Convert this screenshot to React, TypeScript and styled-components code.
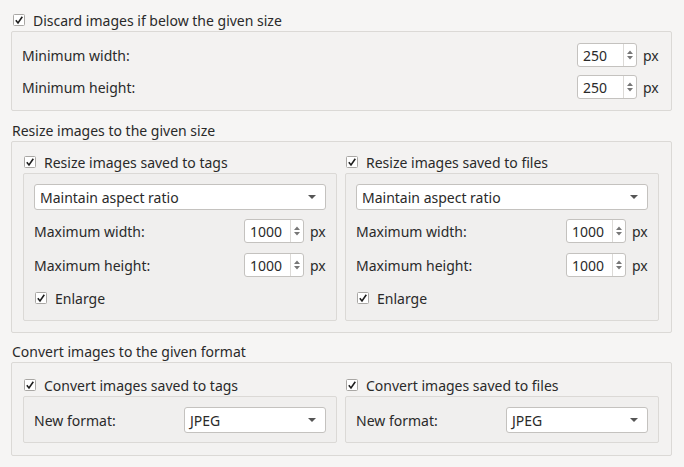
import React from 'react';
import styled, { createGlobalStyle } from 'styled-components';

const GlobalStyle = createGlobalStyle`
  html, body {
    margin: 0;
    padding: 0;
    background: #f6f5f4;
  }
  body {
    font-family: 'Noto Sans', 'DejaVu Sans', sans-serif;
    font-size: 14px;
    color: #2a2a2a;
  }
`;

const Page = styled.div`
  width: 684px;
  height: 467px;
  box-sizing: border-box;
  padding: 9px 12px 0 11px;
  background: #f6f5f4;
  display: flex;
  flex-direction: column;
`;

const Title = styled.div`
  height: 22px;
  margin-top: ${({ $top }: { $top: number }) => $top}px;
  padding-left: 1px;
  display: flex;
  align-items: center;
`;

const CheckRow = styled.label<{ $indent?: number }>`
  height: 22px;
  display: flex;
  align-items: center;
  gap: 8px;
  padding-left: ${({ $indent }) => $indent ?? 0}px;
`;

const Box = styled.div<{ $pad: string; $gap?: number; $shade?: string }>`
  border: 1px solid #dbd9d6;
  border-radius: 2px;
  background: ${({ $shade }) => $shade ?? '#f3f2f1'};
  padding: ${({ $pad }) => $pad};
  display: flex;
  flex-direction: column;
  gap: ${({ $gap }) => $gap ?? 0}px;
`;

const Columns = styled.div`
  display: grid;
  grid-template-columns: 1fr 1fr;
  column-gap: 8px;
`;

const Column = styled.div`
  display: flex;
  flex-direction: column;
`;

const FieldRow = styled.div`
  height: 24px;
  display: flex;
  align-items: center;
`;

const FieldLabel = styled.span`
  flex: 1;
`;

const Unit = styled.span`
  margin-left: 6px;
  width: 16px;
`;

const SpinBox = styled.div`
  width: 60px;
  height: 24px;
  box-sizing: border-box;
  border: 1px solid #c4c2bf;
  border-radius: 3px;
  background: #ffffff;
  display: flex;
  align-items: stretch;
`;

const SpinValue = styled.span`
  flex: 1;
  padding-left: 5px;
  display: flex;
  align-items: center;
`;

const SpinArrows = styled.span`
  width: 12px;
  border-left: 1px solid #dcdad7;
  display: flex;
  align-items: center;
  justify-content: center;
`;

const Combo = styled.div<{ $width?: number }>`
  height: 26px;
  box-sizing: border-box;
  width: ${({ $width }) => ($width ? `${$width}px` : '100%')};
  border: 1px solid #c4c2bf;
  border-radius: 3px;
  background: #ffffff;
  padding: 0 9px 0 5px;
  display: flex;
  align-items: center;
  justify-content: space-between;
`;

const CheckMark = () => (
  <svg width="12" height="12" viewBox="0 0 12 12">
    <rect x="0.5" y="0.5" width="11" height="11" rx="1" fill="#fff" stroke="#a9a7a4" />
    <path d="M2.8 6.2 L5 8.9 L9.3 2.8" fill="none" stroke="#1e1e1e" strokeWidth="1.6" />
  </svg>
);

const Arrow = () => (
  <svg width="8" height="4" viewBox="0 0 8 4">
    <path d="M0 0 H8 L4 4 Z" fill="#555" />
  </svg>
);

const SpinGlyph = () => (
  <svg width="6" height="12" viewBox="0 0 6 12">
    <path d="M0 5 L3 1.5 L6 5 Z M0 7 L3 10.5 L6 7 Z" fill="#777" />
  </svg>
);

const Check: React.FC<{ text: string; indent?: number }> = ({ text, indent }) => (
  <CheckRow $indent={indent}>
    <CheckMark />
    <span>{text}</span>
  </CheckRow>
);

const Spin: React.FC<{ label: string; value: string }> = ({ label, value }) => (
  <FieldRow>
    <FieldLabel>{label}</FieldLabel>
    <SpinBox>
      <SpinValue>{value}</SpinValue>
      <SpinArrows>
        <SpinGlyph />
      </SpinArrows>
    </SpinBox>
    <Unit>px</Unit>
  </FieldRow>
);

const Select: React.FC<{ value: string; width?: number }> = ({ value, width }) => (
  <Combo $width={width}>
    <span>{value}</span>
    <Arrow />
  </Combo>
);

const FormatRow = styled.div`
  display: flex;
  align-items: center;
  justify-content: space-between;
`;

const ResizeColumn: React.FC<{ title: string }> = ({ title }) => (
  <Column>
    <Check text={title} indent={1} />
    <Box $pad="10px 10px 11px 10px" $shade="#f0efee">
      <Select value="Maintain aspect ratio" />
      <div style={{ height: 9 }} />
      <Spin label="Maximum width:" value="1000" />
      <div style={{ height: 10 }} />
      <Spin label="Maximum height:" value="1000" />
      <div style={{ height: 10 }} />
      <Check text="Enlarge" indent={1} />
    </Box>
  </Column>
);

const ConvertColumn: React.FC<{ title: string }> = ({ title }) => (
  <Column>
    <Check text={title} indent={1} />
    <Box $pad="10px 10px 9px 10px" $shade="#f0efee">
      <FormatRow>
        <span>New format:</span>
        <Select value="JPEG" width={142} />
      </FormatRow>
    </Box>
  </Column>
);

export default function App() {
  return (
    <>
      <GlobalStyle />
      <Page>
        <Check text="Discard images if below the given size" indent={2} />
        <Box $pad="11px 12px 11px 10px" $gap={8}>
          <Spin label="Minimum width:" value="250" />
          <Spin label="Minimum height:" value="250" />
        </Box>

        <Title $top={8}>Resize images to the given size</Title>
        <Box $pad="9px 12px 11px 11px">
          <Columns>
            <ResizeColumn title="Resize images saved to tags" />
            <ResizeColumn title="Resize images saved to files" />
          </Columns>
        </Box>

        <Title $top={7}>Convert images to the given format</Title>
        <Box $pad="11px 12px 12px 11px">
          <Columns>
            <ConvertColumn title="Convert images saved to tags" />
            <ConvertColumn title="Convert images saved to files" />
          </Columns>
        </Box>
      </Page>
    </>
  );
}
